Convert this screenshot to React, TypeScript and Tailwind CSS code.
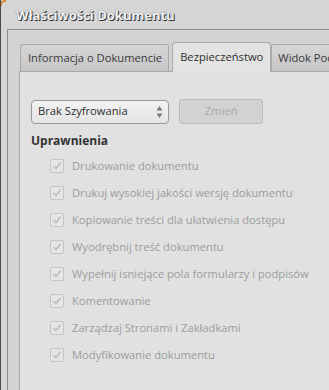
import React from 'react';

const perms = [
    'Drukowanie dokumentu',
    'Drukuj wysokiej jakości wersję dokumentu',
    'Kopiowanie treści dla ułatwienia dostępu',
    'Wyodrębnij treść dokumentu',
    'Wypełnij isniejące pola formularzy i podpisów',
    'Komentowanie',
    'Zarządzaj Stronami i Zakładkami',
    'Modyfikowanie dokumentu',
];

function Check() {
    return (
        <div className="w-[14px] h-[14px] shrink-0 rounded-[2px] border border-[#c4c4c4] bg-[#e6e6e6] flex items-center justify-center">
            <svg width="10" height="10" viewBox="0 0 10 10">
                <path d="M1.5 5.2 L4 7.6 L8.6 1.8" fill="none" stroke="#bdbdbd" strokeWidth="1.6" />
            </svg>
        </div>
    );
}

export default function App() {
    return (
        <div className="w-[329px] h-[390px] overflow-hidden bg-[#d5d5d5] flex flex-col relative border-l border-[#4a4a4a]" style={{ fontFamily: '"Open Sans", "Noto Sans", sans-serif' }}>
            <div className="absolute left-[-1px] top-0 w-[6px] h-[6px] border-l-2 border-t-2 border-[#e0892c] rounded-tl-[5px]"></div>
            <div className="h-[29px] shrink-0 pl-[15px] pt-[6px] text-[13px] font-bold text-[#f4f4f4] whitespace-nowrap" style={{ textShadow: '1px 1px 0 #333, 0 0 1px #444' }}>
                Właściwości Dokumentu
            </div>
            <div className="flex-1 ml-[6px] border-l border-t border-[#8e8e8e] bg-[#d3d3d3] flex flex-col pt-[10px] pl-[11px]">
                <div className="flex items-end h-[31px] text-[11.2px] whitespace-nowrap">
                    <div className="h-[27px] ml-[1px] pl-[7px] pr-[6px] flex items-center rounded-t-[3px] border border-b-0 border-[#a9a9a9] bg-gradient-to-b from-[#d6d6d6] to-[#c6c6c6] text-[#3a3a3a]">
                        Informacja o Dokumencie
                    </div>
                    <div className="h-[30px] ml-[3px] px-[7px] flex items-center rounded-t-[4px] border border-b-0 border-[#a9a9a9] bg-[#e3e3e3] text-[#2f2f2f] relative top-[1px]">
                        Bezpieczeństwo
                    </div>
                    <div className="h-[27px] flex-1 min-w-0 px-[6px] flex items-center rounded-tl-[3px] border border-b-0 border-r-0 border-[#a9a9a9] bg-gradient-to-b from-[#d6d6d6] to-[#c6c6c6] text-[#3a3a3a] overflow-hidden">
                        Widok Początkowy
                    </div>
                </div>
                <div className="flex-1 border-l border-t border-[#a9a9a9] bg-[#e1e1e1] pl-[11px] pt-[27px]">
                    <div className="flex items-center gap-[10px] text-[11.2px]">
                        <div className="w-[138px] h-[24px] rounded-[4px] border border-[#9a9a9a] bg-gradient-to-b from-[#f2f2f2] to-[#e4e4e4] flex items-center justify-between pl-[6px] pr-[5px] text-[#2e2e2e]">
                            <span>Brak Szyfrowania</span>
                            <svg width="7" height="14" viewBox="0 0 7 14">
                                <path d="M3.5 1 L6.5 5.5 L0.5 5.5 Z" fill="#7a7a7a" />
                                <path d="M3.5 13 L6.5 8.5 L0.5 8.5 Z" fill="#7a7a7a" />
                            </svg>
                        </div>
                        <div className="w-[84px] h-[25px] rounded-[3px] border border-[#bcbcbc] bg-[#d2d2d2] flex items-center justify-center text-[#a8a8a8]">
                            Zmień
                        </div>
                    </div>
                    <div className="mt-[8px] text-[12px] font-bold text-[#333]">Uprawnienia</div>
                    <div className="mt-[9px] pl-[19px] flex flex-col gap-[13px]">
                        {perms.map((p) => (
                            <div key={p} className="flex items-center gap-[8px] h-[14px] text-[11.2px] text-[#9c9c9c] whitespace-nowrap">
                                <Check />
                                <span>{p}</span>
                            </div>
                        ))}
                    </div>
                </div>
            </div>
        </div>
    );
}
